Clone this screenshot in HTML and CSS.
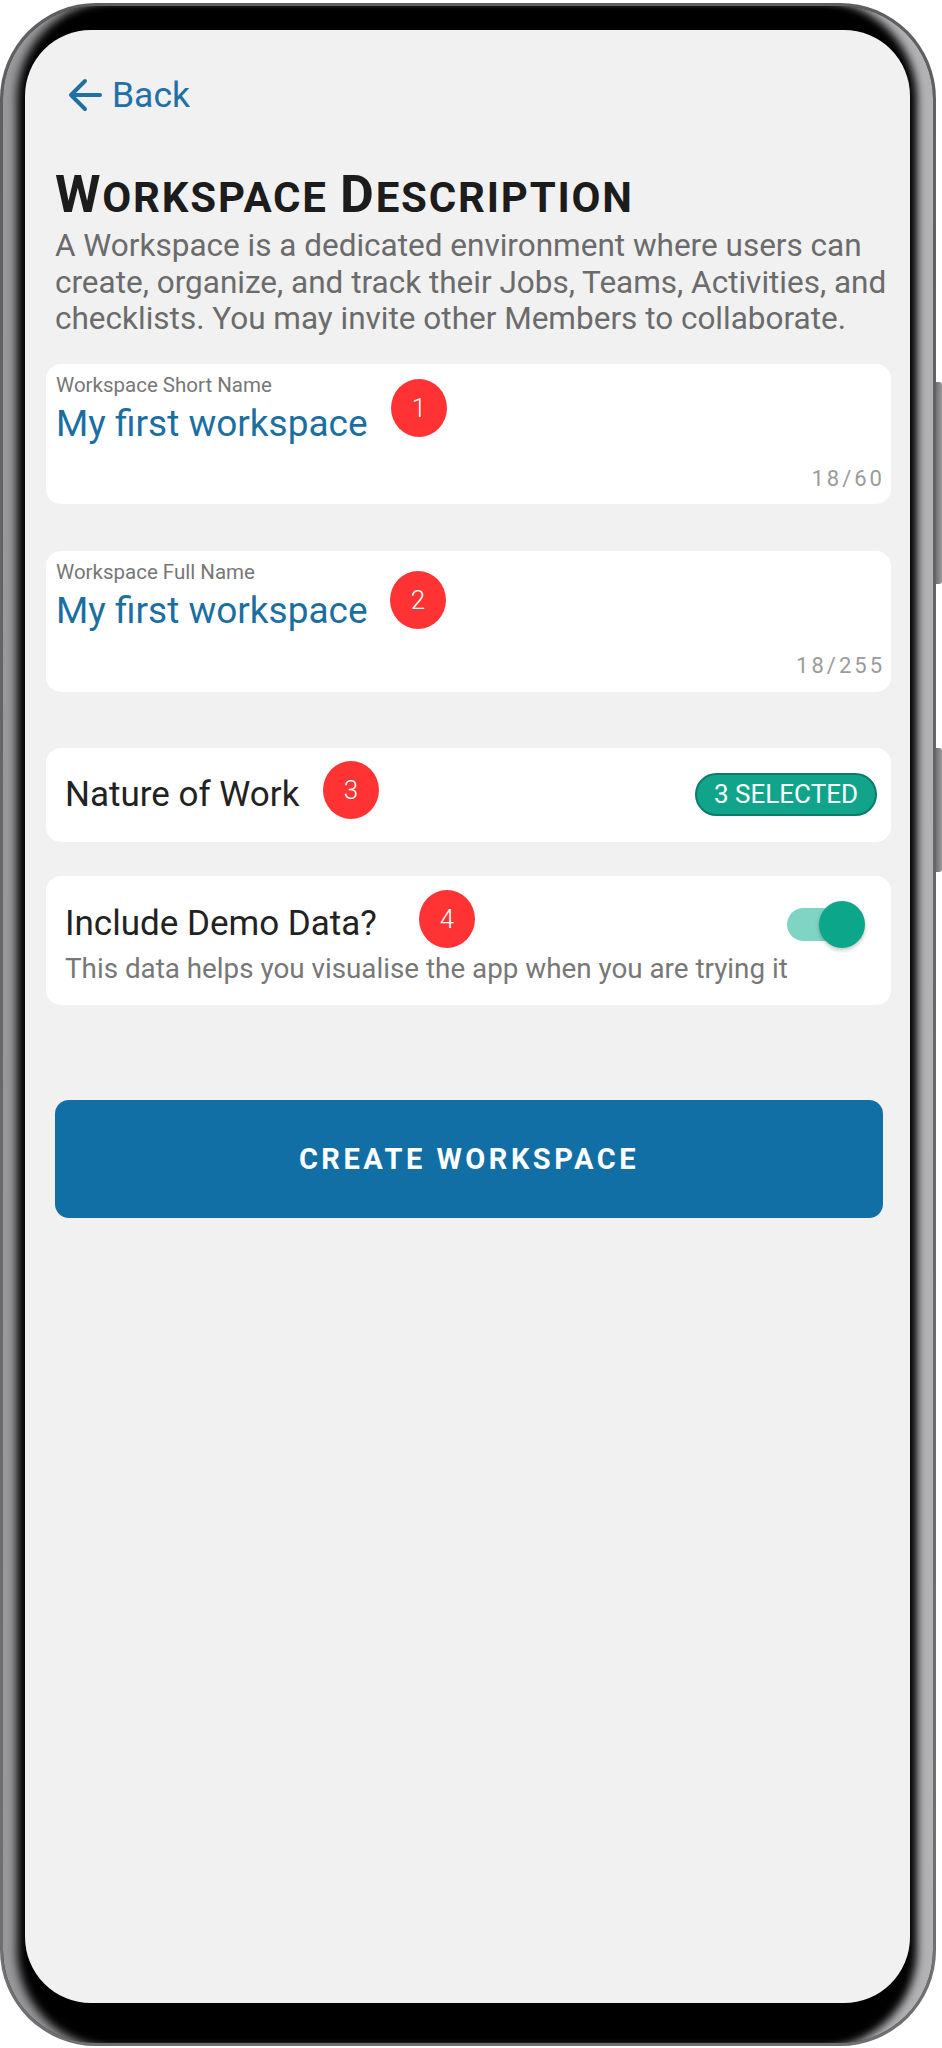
FILE: index.html
```html
<!DOCTYPE html>
<html lang="en">
<head>
    <meta charset="UTF-8">
    <meta name="viewport" content="width=device-width, initial-scale=1.0">
    <title>Workspace Description</title>
    <link rel="stylesheet" href="styles.css">
</head>
<body>
    <div class="phone">
        <span class="side-key key-volume"></span>
        <span class="side-key key-power"></span>
        <div class="bezel">
            <div class="screen">
                <div class="content">
                    <!-- top bar -->
                    <a class="back" href="#">
                        <svg class="back-arrow" viewBox="0 0 34 36" width="34" height="36">
                            <path d="M32 18H4M17 4L3 18l14 14" fill="none" stroke="currentColor" stroke-width="4" stroke-linecap="round" stroke-linejoin="round"/>
                        </svg>
                        <span>Back</span>
                    </a>

                    <h1 class="title"><span class="big">W</span>orkspace <span class="big">D</span>escription</h1>
                    <p class="desc">A Workspace is a dedicated environment where users can create, organize, and track their Jobs, Teams, Activities, and checklists. You may invite other Members to collaborate.</p>

                    <!-- form fields -->
                    <div class="card field">
                        <div class="field-label">Workspace Short Name</div>
                        <div class="field-value">My first workspace</div>
                        <div class="field-count">18/60</div>
                        <span class="marker m1">1</span>
                    </div>

                    <div class="card field field-full">
                        <div class="field-label">Workspace Full Name</div>
                        <div class="field-value">My first workspace</div>
                        <div class="field-count">18/255</div>
                        <span class="marker m2">2</span>
                    </div>

                    <div class="card row-card">
                        <div class="row-title">Nature of Work</div>
                        <span class="pill">3 SELECTED</span>
                        <span class="marker m3">3</span>
                    </div>

                    <div class="card demo">
                        <div class="demo-head">
                            <div class="row-title">Include Demo Data?</div>
                            <div class="toggle">
                                <span class="toggle-track"></span>
                                <span class="toggle-thumb"></span>
                            </div>
                        </div>
                        <div class="demo-note">This data helps you visualise the app when you are trying it</div>
                        <span class="marker m4">4</span>
                    </div>

                    <button class="create" type="button">CREATE WORKSPACE</button>
                </div>
            </div>
        </div>
    </div>
</body>
</html>
```

FILE: styles.css
```css
body {
    margin: 0;
    background: #ffffff;
    font-family: Roboto, "Noto Sans", Arial, sans-serif;
}

/* phone body */
.phone {
    position: relative;
    width: 936px;
    height: 2043px;
    margin-top: 3px;
    padding: 3px;
    box-sizing: border-box;
    border-radius: 96px;
    background: linear-gradient(to bottom, #5f5f62, #707073);
}

.side-key {
    position: absolute;
    right: -6px;
    width: 6px;
    border-radius: 0 3px 3px 0;
    background: linear-gradient(to right, #707073, #9a9a9d);
}

.key-volume {
    top: 379px;
    height: 202px;
}

.key-power {
    top: 745px;
    height: 124px;
}

.bezel {
    height: 100%;
    padding: 24px 23px 40px 22px;
    box-sizing: border-box;
    border-radius: 93px;
    background: #000;
    box-shadow: inset 20px 0 10px -6px #98989b, inset -22px 0 8px -6px #b2b2b5;
}

.screen {
    height: 100%;
    border-radius: 66px;
    background: #f1f1f1;
    overflow: hidden;
}

.content {
    padding: 47px 19px 0 21px;
}

.back {
    display: flex;
    align-items: center;
    gap: 10px;
    height: 36px;
    margin-left: 22px;
    color: #1f70a6;
    text-decoration: none;
    font-size: 35.5px;
    line-height: 36px;
}

.back-arrow {
    display: block;
}

.title {
    margin: 54px 0 0 9px;
    font-size: 42px;
    line-height: 56px;
    font-weight: 700;
    text-transform: uppercase;
    letter-spacing: 1.8px;
    color: #1c1c1c;
}

.title .big {
    font-size: 52px;
}

.desc {
    margin: 2px -10px 0 9px;
    font-size: 31.5px;
    line-height: 36.5px;
    color: #6b6b6b;
}

.card {
    position: relative;
    background: #fff;
    border-radius: 15px;
}

.field {
    margin-top: 26px;
    padding: 9px 6px 11.5px 10px;
}

.field-full {
    margin-top: 47px;
    padding-bottom: 12.5px;
}

.field-label {
    font-size: 20.5px;
    line-height: 24px;
    color: #777;
}

.field-value {
    margin-top: 4px;
    font-size: 37px;
    line-height: 46px;
    color: #1b6fa0;
}

.field-count {
    margin-top: 19.5px;
    text-align: right;
    font-size: 22px;
    line-height: 26px;
    letter-spacing: 3px;
    color: #9b9b9b;
}

.row-card {
    display: flex;
    align-items: center;
    justify-content: space-between;
    height: 94px;
    margin-top: 56px;
    padding: 0 14px 0 19px;
}

.row-title {
    font-size: 35px;
    line-height: 44px;
    color: #222;
}

.pill {
    width: 182px;
    height: 43px;
    box-sizing: border-box;
    border: 2px solid #0b7c68;
    border-radius: 22px;
    background: #10a58a;
    color: #fff;
    text-align: center;
    font-size: 26px;
    line-height: 39px;
}

.demo {
    margin-top: 34px;
    padding: 25.4px 26px 20px 19px;
}

.demo-head {
    display: flex;
    align-items: center;
    justify-content: space-between;
}

.demo-note {
    margin-top: 5.4px;
    font-size: 27.8px;
    line-height: 32px;
    color: #777;
}

.toggle {
    display: flex;
    align-items: center;
}

.toggle-track {
    width: 66px;
    height: 33px;
    border-radius: 17px;
    background: #80d4c3;
}

.toggle-thumb {
    width: 46px;
    height: 47px;
    margin-left: -34px;
    border-radius: 50%;
    background: #0ca68a;
    box-shadow: 0 2px 4px rgba(0, 0, 0, 0.25);
}

.create {
    display: block;
    width: 828px;
    height: 118px;
    margin: 95px 0 0 9px;
    border: none;
    border-radius: 14px;
    background: #116fa6;
    color: #fff;
    font-family: inherit;
    font-size: 29px;
    font-weight: 700;
    letter-spacing: 3.5px;
}

/* numbered callouts */
.marker {
    position: absolute;
    width: 56px;
    height: 58px;
    border-radius: 50%;
    background: #ff3333;
    color: #fff;
    font-size: 26px;
    font-weight: 300;
    line-height: 58px;
    text-align: center;
}

.m1 { left: 345px; top: 15px; }
.m2 { left: 344px; top: 20px; }
.m3 { left: 277px; top: 13px; }
.m4 { left: 373px; top: 14px; }
```
